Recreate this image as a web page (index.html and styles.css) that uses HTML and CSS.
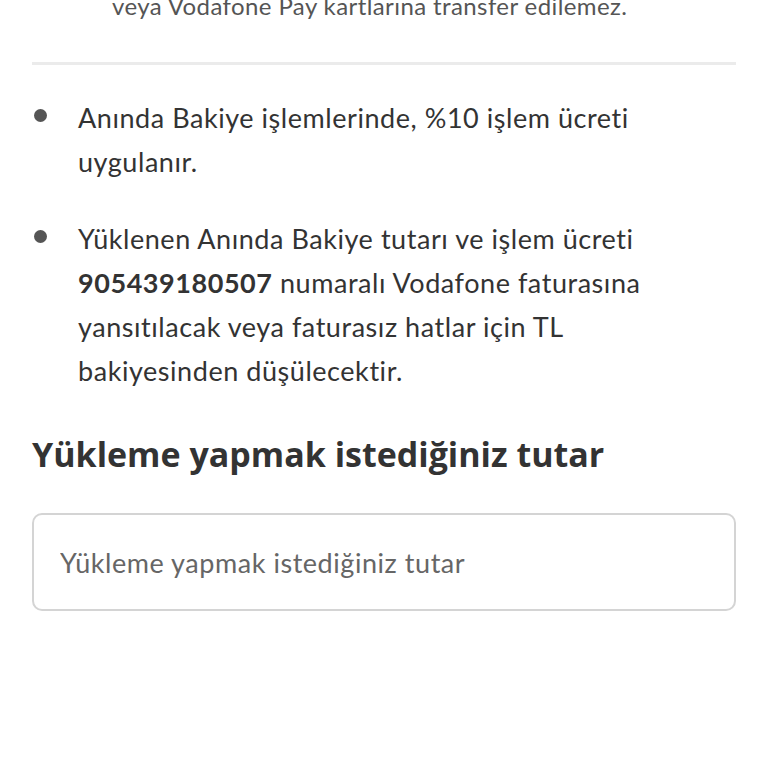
FILE: index.html
```html
<!DOCTYPE html>
<html>
<head>
    <title>Anında Bakiye</title>
    <link rel="stylesheet" href="styles.css">
</head>
<body>
    <div class="page">
        <p class="note">veya Vodafone Pay kartlarına transfer edilemez.</p>
        <hr class="divider">
        <ul class="info">
            <li>Anında Bakiye işlemlerinde, %10 işlem ücreti uygulanır.</li>
            <li>Yüklenen Anında Bakiye tutarı ve işlem ücreti <b>905439180507</b> numaralı Vodafone faturasına yansıtılacak veya faturasız hatlar için TL bakiyesinden düşülecektir.</li>
        </ul>
        <h2 class="title">Yükleme yapmak istediğiniz tutar</h2>
        <input class="amount" type="text" placeholder="Yükleme yapmak istediğiniz tutar">
    </div>
</body>
</html>
```

FILE: styles.css
```css
:root {
    --text-color: #333;
    --muted-color: #666;
    --line-color: #ebebeb;
}

body {
    margin: 0;
    background: #fff;
    color: var(--text-color);
    font-family: Lato, "Open Sans", sans-serif;
    overflow: hidden;
}

.page {
    padding: 0 32px;
}

.note {
    margin: -16px 0 0;
    padding-left: 80px;
    font-size: 24px;
    letter-spacing: 0.4px;
    line-height: 44px;
    color: #555;
}

.divider {
    border: 0;
    height: 3px;
    background: var(--line-color);
    margin: 34px 0 0;
}

.info {
    list-style: none;
    margin: 0;
    padding: 31px 60px 0 0;
}

.info li {
    position: relative;
    padding-left: 46px;
    font-size: 27px;
    letter-spacing: 0.55px;
    line-height: 44px;
    margin-bottom: 33px;
}

.info li:last-child {
    margin-bottom: 0;
}

.info li::before {
    content: "";
    position: absolute;
    left: 2px;
    top: 13px;
    width: 13px;
    height: 13px;
    border-radius: 50%;
    background: #555;
}

.info b {
    font-weight: 700;
}

.title {
    margin: 36px 0 0;
    font-family: "Open Sans", Lato, sans-serif;
    font-size: 34px;
    line-height: 50px;
    font-weight: 700;
}

.amount {
    display: block;
    box-sizing: border-box;
    width: 100%;
    height: 98px;
    margin-top: 34px;
    padding: 0 26px;
    border: 2px solid #d4d4d4;
    border-radius: 10px;
    font-family: inherit;
    font-size: 27px;
    letter-spacing: 0.55px;
    color: var(--text-color);
    outline: none;
}

.amount::placeholder {
    color: var(--muted-color);
}
```
